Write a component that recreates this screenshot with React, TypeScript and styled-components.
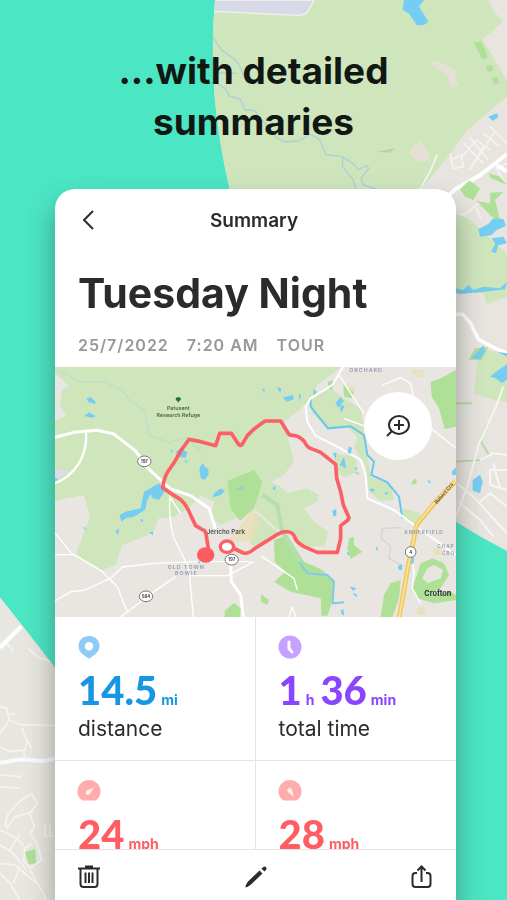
import React from "react";
import styled, { createGlobalStyle } from "styled-components";

const GlobalStyle = createGlobalStyle`
  *, *::before, *::after { box-sizing: border-box; }
  body { margin: 0; background: #4be6c4; }
  h1, h2, h3, p, dl, dd, dt { margin: 0; }
`;

const Page = styled.main`
  position: relative;
  isolation: isolate;
  display: flex;
  flex-direction: column;
  height: 100vh;
  overflow: hidden;
  background: #4be6c4;
  font-family: Inter, "Liberation Sans", sans-serif;
  color: #2b2b2d;
`;

const Backdrop = styled.svg`
  position: absolute;
  inset: 0;
  z-index: -1;
  width: 100%;
  height: 100%;
`;

const Headline = styled.h1`
  max-width: 340px;
  margin: 0 auto;
  padding: 45px 0 42px;
  font-size: 37px;
  line-height: 51px;
  font-weight: 700;
  text-align: center;
  color: #111713;
`;

const Card = styled.section`
  display: flex;
  flex: 1;
  flex-direction: column;
  min-height: 0;
  margin: 0 51px 0 55px;
  overflow: hidden;
  border-radius: 20px 20px 0 0;
  background: #fff;
`;

const CardShadow = styled.div`
  display: flex;
  flex: 1;
  flex-direction: column;
  min-height: 0;
  filter: drop-shadow(0 16px 14px rgba(40, 40, 40, 0.42));
`;

const NavBar = styled.header`
  display: grid;
  grid-template-columns: 24px 1fr 24px;
  align-items: center;
  height: 62px;
  flex-shrink: 0;
  padding: 0 24px 0 21px;
`;

const NavTitle = styled.h2`
  padding-top: 2px;
  font-size: 19px;
  line-height: 24px;
  font-weight: 600;
  text-align: center;
`;

const IconButton = styled.button`
  display: grid;
  place-items: center;
  width: 24px;
  height: 24px;
  padding: 0;
  border: 0;
  background: none;
  color: #2b2b2d;
  cursor: pointer;
`;

const Intro = styled.div`
  flex-shrink: 0;
  padding: 16px 23px 12px;
`;

const RideTitle = styled.h3`
  font-size: 41px;
  line-height: 52px;
  font-weight: 700;
  white-space: nowrap;
`;

const Meta = styled.p`
  display: flex;
  gap: 18px;
  padding-top: 16px;
  font-size: 16px;
  line-height: 20px;
  font-weight: 600;
  letter-spacing: 1px;
  color: #98989a;
`;

const MapPanel = styled.div`
  position: relative;
  flex-shrink: 0;
  height: 250px;
  overflow: hidden;
`;

const MapDrawing = styled.svg`
  display: block;
  width: 100%;
  height: 100%;
  font-family: Inter, "Liberation Sans", sans-serif;
`;

const ZoomButton = styled.button`
  position: absolute;
  top: 25px;
  right: 24px;
  display: grid;
  place-items: center;
  width: 68px;
  height: 68px;
  padding: 0;
  border: 0;
  border-radius: 50%;
  background: #fff;
  color: #2b2b2d;
  cursor: pointer;
`;

const Stats = styled.dl`
  display: grid;
  flex: 1;
  grid-template-columns: 1fr 1fr;
  grid-auto-rows: 144px;
  min-height: 0;
  overflow: hidden;
`;

const Stat = styled.div`
  display: flex;
  flex-direction: column;
  padding: 18px 23px 0;
  border-bottom: 1px solid #e4e4e4;

  &:nth-child(odd) { border-right: 1px solid #e4e4e4; }
`;

const StatIcon = styled.svg`
  flex-shrink: 0;
  width: 24px;
  height: 24px;
  margin-left: -1px;
`;

const StatValue = styled.dd<{ $color: string }>`
  order: 1;
  padding-top: 12px;
  font-family: Lato, "Liberation Sans", sans-serif;
  font-size: 40px;
  line-height: 38px;
  font-weight: 900;
  white-space: nowrap;
  color: ${(p) => p.$color};
`;

const Unit = styled.span`
  margin: 0 6px 0 4px;
  font-family: Inter, "Liberation Sans", sans-serif;
  font-size: 14px;
  font-weight: 700;
`;

const StatLabel = styled.dt`
  order: 2;
  font-size: 21px;
  line-height: 20px;
`;

const Toolbar = styled.footer`
  display: flex;
  flex-shrink: 0;
  align-items: center;
  justify-content: space-between;
  height: 51px;
  padding: 3px 22px 0;
  border-top: 1px solid #e4e4e4;
`;

const water = "#75cdf2";
const park = "#cfe6bd";
const grove = "#aee097";

function BackgroundMap() {
  return (
    <Backdrop viewBox="0 0 1521 2700" preserveAspectRatio="xMidYMin slice" aria-hidden="true">
      <defs>
        <clipPath id="rightArea">
          <path d="M645 0Q632 160 644 290Q656 430 690 570C790 940 1040 1380 1365 1564Q1440 1612 1521 1653V0Z" />
        </clipPath>
        <clipPath id="leftArea">
          <path d="M0 1792Q86 1900 166 2004L500 2300V2700H0Z" />
        </clipPath>
      </defs>
      <g clipPath="url(#rightArea)">
        <rect width="1521" height="2700" fill="#e8e5e0" />
        <path d="M600 0H1465L1478 28L1508 66L1448 118L1521 242V290L1400 392L1345 470L1260 570V700H600Z" fill={park} />
        <path d="M640 0H942L925 32Q918 46 895 46L640 34Z" fill="#d8d9e6" stroke="#f0f1ef" strokeWidth="4" />
        <path d="M1212 0H1272L1257 20L1284 62Q1282 77 1250 76L1228 42L1208 30Z" fill={water} />
        <path d="M1290 182L1321 186L1368 213L1365 235L1378 258L1350 264L1345 230L1310 205Z M1258 420L1280 446L1290 475L1274 486Q1240 482 1226 455Z" fill="#e4e0d4" />
        <path d="M1130 455L1185 445L1170 458Z" fill="#bdceaa" />
        <path d="M1422 128L1444 123L1464 172L1447 180Z M1456 200L1474 195L1481 210L1463 216Z M1474 236L1490 230L1498 249L1482 252Z" fill={grove} />
        <path d="M1465 350L1490 340L1496 350L1478 363Z" fill={water} />
        <g fill="none" stroke="#a9cfdc" strokeWidth="4">
          <path d="M640 112L665 150L700 175L716 192L740 245" />
          <path d="M650 250L675 265L688 288L720 297L735 330L765 332L775 350L810 385L828 412L855 426L900 422L930 402L958 418L978 464L1028 470L1060 492L1075 510L1100 496L1106 505L1083 535L1090 555L1130 568" />
          <path d="M1028 470L1027 500L1045 520L1060 540L1068 570M655 218L710 220" />
        </g>
        <g fill="none" stroke="#f5f3ef" strokeWidth="5">
          <path d="M1312 464L1290 515L1260 568M1350 460L1360 506L1390 500L1385 470L1430 420L1470 450M1390 430L1450 490M1410 412L1464 480M1450 400L1500 440M1470 380L1521 430M1430 480L1480 400M1410 510L1450 440M1350 480L1400 460" />
          <path d="M1367 650L1400 640L1435 610M1442 655L1430 625M1521 560L1490 505L1521 490" />
        </g>
        <path d="M1330 600L1368 566L1440 526L1521 462M1490 495L1521 515" fill="none" stroke="#fff" strokeWidth="12" />
        <path d="M1380 568L1408 541L1440 565L1420 600L1395 590Z M1466 520L1500 530L1521 555L1470 533Z M1430 603L1470 610L1470 578L1510 576L1485 600L1500 660L1475 650Z" fill={grove} />
        <path d="M1360 640Q1420 655 1440 690L1521 760V890L1460 912L1450 880L1360 870Z" fill={park} />
        <g fill={water}>
          <path d="M1435 688L1465 672L1480 655L1510 657L1518 678L1490 690L1474 706L1440 710Z M1475 715L1510 710L1521 730L1494 736L1488 760L1473 755L1486 732Z" />
          <path d="M1360 863L1390 870L1405 855L1420 870L1450 860L1500 865L1521 845L1515 868L1440 877L1380 882L1360 878Z" />
        </g>
        <path d="M1360 943H1388L1412 970L1435 1018L1480 1042L1521 1060" fill="none" stroke="#fff" strokeWidth="11" />
        <path d="M1437 1040L1521 1070V1209L1423 1183Z" fill={park} />
        <path d="M1406 1079L1425 1045L1465 1042L1445 1080Z" fill={grove} />
        <path d="M1415 1075L1450 1036L1455 1055L1440 1078Z M1470 1130L1492 1112L1521 1092V1138L1506 1150L1487 1135Z M1490 1055L1521 1060V1070Z M1418 1440L1440 1424L1448 1445L1440 1480L1418 1472Z" fill={water} />
        <path d="M1368 1210H1415M1462 1272L1440 1320L1467 1365L1440 1380L1368 1385" fill="none" stroke="#afd99c" strokeWidth="5" />
        <g fill="none" stroke="#f8f6f3" strokeWidth="6">
          <path d="M1510 1160L1488 1220L1437 1330L1405 1450L1370 1545M1370 1450L1420 1490L1521 1600M1440 1380L1480 1360L1521 1365M1470 1410H1521M1470 1410V1455L1521 1470M1375 1505L1440 1560L1480 1610M1440 1505L1470 1480L1521 1520M1480 1390L1500 1465" />
        </g>
      </g>
      <g clipPath="url(#leftArea)">
        <rect y="1780" width="520" height="920" fill="#e8e6e0" />
        <path d="M0 1943L64 1879" stroke="#fff" strokeWidth="13" />
        <path d="M0 2288L65 2278L125 2283L170 2276" fill="none" stroke="#fafafe" strokeWidth="12" />
        <g fill="none" stroke="#f6f4f0" strokeWidth="5">
          <path d="M85 1945L110 1970L170 1990M20 1930L40 1955M0 2120L20 2125L28 2160L0 2200M28 2160L60 2174L170 2177M66 2184L75 2210L95 2245M30 2140L46 2145M0 2240L30 2255L75 2250L80 2225M70 2250L75 2277M0 2325L65 2330M0 2360L60 2365" />
          <path d="M20 2485Q10 2455 35 2430Q70 2390 95 2382L112 2410L92 2437L45 2450L20 2485M88 2440L104 2480L90 2500L110 2530L125 2580L90 2605L70 2580L75 2545L95 2530M0 2490L50 2515L70 2535M0 2535L35 2555L80 2610M0 2590L45 2595L110 2650M0 2620L30 2650L60 2700M30 2550L60 2500M60 2600L40 2650M90 2610L140 2700M135 2475V2510L165 2508M150 2475V2505" />
        </g>
        <path d="M75 2555L106 2548L108 2590L86 2593Z" fill={grove} />
      </g>
    </Backdrop>
  );
}

function RideMap() {
  return (
    <MapDrawing viewBox="3 6 1203 750" preserveAspectRatio="xMidYMid slice" role="img" aria-label="Map of the ride">
      <rect width="1210" height="760" fill="#e9e6e1" />
      <path d="M0 0H870L790 60L765 110L690 170L720 290L690 330L650 350L610 430L570 450L500 480L470 460L480 410L440 392L410 425L360 455L315 460L295 505L205 540L185 600L145 616L65 570L108 455L90 390L0 408V170L38 150L18 120L25 75L45 62L0 22Z" fill={park} />
      <path d="M0 310L46 318L0 345Z" fill="#dedbea" />
      <path d="M768 110L800 80L830 70L870 100L920 130L930 180L930 240L945 300L950 335L1010 360L1020 405L980 408L945 380L935 300L900 250L910 215L880 187L820 190L775 145Z M840 265L905 275L910 320L875 338L845 320Z M650 350L680 365L700 385L760 370L795 390L790 410L750 430L780 470L822 500L812 545L755 545L700 500L680 500L600 430V370Z M600 440L670 500L610 550L590 540Z M1047 430L1100 445L1095 478L1045 460Z" fill={park} />
      <path d="M520 348L600 315L625 350L600 430L558 468L530 430Z M660 525L700 510L750 590L800 612L840 645L838 700L820 752H802L800 700L710 680L660 650L695 620L662 590Z M540 714L512 738V756H558L560 730Z M1130 50L1160 40L1206 15V185L1172 192L1155 130L1133 95Z M1075 348L1087 340L1088 356L1072 358Z M1010 655L1040 645L1035 700L1015 756H980L990 690Z M822 50L840 45L835 75L823 70Z M868 60L900 80L895 100L870 95Z M622 688L645 705L640 720L620 710Z M885 520L900 515V540L925 560L890 582L880 550Z" fill={grove} />
      <path d="M1085 640L1100 595L1135 580L1170 595L1185 630L1160 670L1120 690L1190 680L1206 690V705L1140 715L1090 700L1075 670Z M1105 640L1120 655L1160 640L1168 615L1140 600L1120 610Z" fill={grove} fillRule="evenodd" />
      <path d="M598 430L618 480L595 530L520 530L560 480Z M878 55L905 65L895 85Z M1137 550L1165 545L1160 570L1140 572Z M1070 15L1110 15L1105 38L1085 36Z M1088 730L1112 725V750H1090Z" fill="#e8ddb3" opacity=".75" />
      <g fill="none" stroke="#abd3df" strokeWidth="4">
        <path d="M20 18L70 50L150 50L205 75L230 110L270 135L285 210L345 232L400 218L440 262" stroke="#bdddc8" />
        <path d="M1040 488L985 490L982 520L1010 545L1005 580L1050 605" stroke="#ced5df" />
        <path d="M735 590L760 625L820 630L840 650L836 715L870 712" stroke="#7fcce9" strokeWidth="6" />
        <path d="M770 100L770 125L822 190L890 184L930 210L940 270L960 290L952 330L1000 352L1035 395L1045 460" stroke="#68c7ed" strokeWidth="6" />
        <path d="M625 390L670 420L685 500L740 590" stroke="#b4dfaf" strokeWidth="12" />
      </g>
      <g fill="none" stroke="#fff" strokeLinejoin="round">
        <path d="M0 218L60 202L130 196L178 206L245 258L285 313L350 372L410 392L465 430L485 492" strokeWidth="9" />
        <path d="M96 202Q100 250 75 295Q45 340 0 356" strokeWidth="7" />
        <path d="M350 375Q340 450 360 520L405 610L418 756M0 570L60 568L145 620L190 665L220 740M0 710L50 680L90 676L170 640L205 606L300 595L440 590L590 590M365 635L300 680L200 756M405 632H520L600 590M350 400L380 445M0 500L55 568" strokeWidth="4" />
        <path d="M530 600L532 650L560 690L568 756" strokeWidth="9" />
        <path d="M870 0L835 60L770 100L755 125L760 170L785 212L850 245L920 285L935 330L940 400L1020 435L1080 480L1206 570" strokeWidth="6" />
        <path d="M855 30L900 100L930 145M985 60L1040 38L1070 55L1078 95M1130 190L1206 250M620 572L720 640L730 675M1070 550L1080 620L1075 670L1100 715M705 756L715 725L725 756M870 160L950 190" strokeWidth="4" />
      </g>
      <g fill={water}>
        <path d="M97 100L110 97L125 110L123 117L104 112Z M90 153L105 142L125 153L115 158Z M202 470L197 450L215 440L260 430L270 380L315 355L335 375L315 405L295 400L290 388L280 405L273 435L240 455L218 458Z M436 310L446 293L452 305L463 312L464 328L453 345L440 340Z M366 260L380 250L400 262L395 278L370 275Z M348 255L358 258L353 263Z M391 285L401 288L396 295Z M490 378L500 370L513 378L500 390L476 397L480 385Z M545 376L567 362L565 371Z M183 497L196 493L192 510Z M285 502L297 500L297 511Z M0 338L12 342L5 350Z M88 485L96 489L93 496Z M430 590L439 588L437 596Z M258 463L270 464L262 471Z" />
        <path d="M625 73L632 70L631 85Z M668 66L682 70L679 84Z M685 98L715 90L720 102L700 110Z M735 88L742 90L735 108Z M778 73L790 80L778 92Z M845 113L860 97L870 108L853 128Z M860 120L872 122L863 140L858 136Z M836 265L848 262L845 282Z M857 300L870 275L877 310Z M880 262L885 245L894 248L890 268Z M901 306L912 310L906 315Z M902 322L914 323L913 330Z M655 370L664 362L664 378Z M835 437L847 432L847 453L838 454Z M944 373L955 370L963 376L955 381Z M992 382H1001V388H992Z M1120 346L1130 347L1127 357Z M1193 320L1206 307V330H1195Z M877 562L886 563L884 573Z M964 548L971 546L970 560Z M1032 603L1043 598L1045 615H1035Z M1070 578L1080 575L1079 596H1071Z M886 664L907 670L898 678Z M895 683L911 690L905 695Z M860 735L868 733L871 752L863 748Z" />
      </g>
      <path d="M1206 348L1145 410L1088 480L1065 590L1035 760" fill="none" stroke="#efc65f" strokeWidth="14" />
      <path d="M1206 346L1145 408L1088 478L1065 590L1035 760" fill="none" stroke="#fbe69d" strokeWidth="5" />
      <g fill="#fff" stroke="#77787a" strokeWidth="3">
        <ellipse cx="271" cy="289" rx="20" ry="16" />
        <ellipse cx="533" cy="584" rx="20" ry="16" />
        <ellipse cx="276" cy="694" rx="20" ry="16" />
        <circle cx="1070" cy="561" r="16" />
      </g>
      <g fill="#444" fontSize="13" fontWeight="700" textAnchor="middle">
        <text x="271" y="294">197</text>
        <text x="533" y="589">197</text>
        <text x="276" y="699">564</text>
        <text x="1070" y="566">4</text>
      </g>
      <path d="M365 101Q366 95 373 97Q380 95 381 101Q381 107 375 108V112H371V108Q364 107 365 101Z" fill="#26702d" />
      <g fill="#4b6742" fontSize="16" fontWeight="600" textAnchor="middle">
        <text x="373" y="135">Patuxent</text>
        <text x="373" y="157">Research Refuge</text>
      </g>
      <g fill="#9098b6" fontSize="16" fontWeight="600" textAnchor="middle" letterSpacing="3">
        <text x="397" y="611">OLD TOWN</text>
        <text x="397" y="631">BOWIE</text>
        <text x="936" y="22">ORCHARD</text>
        <text x="1110" y="507" fontSize="14">AMBERFIELD</text>
        <text x="1150" y="550" fontSize="14" textAnchor="start">CHAP</text>
        <text x="1164" y="571" fontSize="14" textAnchor="start">CRO</text>
      </g>
      <text x="458" y="508" fill="#4c545a" fontSize="19" fontWeight="600">Jericho Park</text>
      <text x="1111" y="694" fill="#292c2c" fontSize="22" fontWeight="700">Crofton</text>
      <text transform="translate(1149 418) rotate(-50)" fill="#5c5339" fontSize="15" fontWeight="600">Robert Cra</text>
      <path d="M455 570L463 550L458 520Q456 494 445 494L425 482L412 455Q396 416 380 404L350 385L326 368Q330 340 340 322L362 290L380 258L405 223L440 230L485 242L497 205H532L553 237Q560 246 565 237L580 212L600 192L633 168H680L700 200Q704 212 716 211Q732 210 750 228Q760 248 770 250L800 262L845 298L848 340L860 380L868 420L885 458L882 465L860 482L860 520L850 562H790L750 545Q728 532 724 521Q718 502 705 501Q690 497 670 508L600 552Q583 568 568 564L543 552L519 545" fill="none" stroke="#fa6065" strokeWidth="11" strokeLinejoin="round" />
      <ellipse cx="455" cy="570" rx="26" ry="23" fill="#fd5b60" />
      <ellipse cx="519" cy="545" rx="20" ry="17" fill="#fff" stroke="#fa6065" strokeWidth="10" />
    </MapDrawing>
  );
}

const icons = {
  pin: (
    <StatIcon viewBox="0 0 24 24" aria-hidden="true">
      <path fillRule="evenodd" fill="#8fccf3" d="M12 1C6 1 1.500 5 1.500 11c0 5 3.500 8 7 10.200C10 22 11 23.500 12 23.500s2-1.500 3.500-2.300C19 19 22.500 16 22.500 11 22.500 5 18 1 12 1Zm0 6a4.200 4.200 0 1 1 0 8.400A4.200 4.200 0 0 1 12 7Z" />
    </StatIcon>
  ),
  clock: (
    <StatIcon viewBox="0 0 24 24" aria-hidden="true">
      <circle cx="12" cy="12" r="11.500" fill="#c7a1ff" />
      <path d="M11 7v6.500l3 3.500" fill="none" stroke="#fff" strokeWidth="3" strokeLinecap="round" />
    </StatIcon>
  ),
  average: (
    <StatIcon viewBox="0 0 24 24" aria-hidden="true">
      <path d="M5.500 21.500C2 19.500 .5 16 .5 12.500a11.500 11.500 0 0 1 23 0c0 3.500-1.500 7-5 9Z" fill="#ffacaf" />
      <path d="M17 8.500l-4 6.200a2.300 2.300 0 1 1-3-3.200Z" fill="#fff3e6" />
    </StatIcon>
  ),
  top: (
    <StatIcon viewBox="0 0 24 24" aria-hidden="true">
      <path d="M5.500 21.500C2 19.500 .5 16 .5 12.500a11.500 11.500 0 0 1 23 0c0 3.500-1.500 7-5 9Z" fill="#ffacaf" />
      <path d="M16 18l-6.200-5a2.300 2.300 0 1 1 3.700-3Z" fill="#fff3e6" />
    </StatIcon>
  ),
};

type StatItem = {
  icon: keyof typeof icons;
  color: string;
  parts: [string, string][];
  label: string;
};

const stats: StatItem[] = [
  { icon: "pin", color: "#1696e3", parts: [["14.5", "mi"]], label: "distance" },
  { icon: "clock", color: "#8945ff", parts: [["1", "h"], ["36", "min"]], label: "total time" },
  { icon: "average", color: "#ff5d62", parts: [["24", "mph"]], label: "" },
  { icon: "top", color: "#ff5d62", parts: [["28", "mph"]], label: "" },
];

export default function App() {
  return (
    <Page>
      <GlobalStyle />
      <BackgroundMap />
      <Headline>...with detailed summaries</Headline>
      <CardShadow>
        <Card>
          <NavBar>
            <IconButton type="button" aria-label="Back">
              <svg width="24" height="24" viewBox="0 0 24 24" fill="none" stroke="currentColor" strokeWidth="2">
                <path d="M17 3L8 12l9 9" />
              </svg>
            </IconButton>
            <NavTitle>Summary</NavTitle>
          </NavBar>
          <Intro>
            <RideTitle>Tuesday Night</RideTitle>
            <Meta>
              <span>25/7/2022</span>
              <span>7:20 AM</span>
              <span>TOUR</span>
            </Meta>
          </Intro>
          <MapPanel>
            <RideMap />
            <ZoomButton type="button" aria-label="Enlarge map">
              <svg width="24" height="24" viewBox="0 0 24 24" fill="none" stroke="currentColor" strokeWidth="2">
                <ellipse cx="13" cy="11" rx="10" ry="9" />
                <path d="M13 6v10M8 11h10M6 17l-5 5" />
              </svg>
            </ZoomButton>
          </MapPanel>
          <Stats>
            {stats.map((s) => (
              <Stat key={s.icon}>
                {icons[s.icon]}
                {s.label && <StatLabel>{s.label}</StatLabel>}
                <StatValue $color={s.color}>
                  {s.parts.map(([value, unit]) => (
                    <React.Fragment key={unit}>
                      {value}
                      <Unit>{unit}</Unit>
                    </React.Fragment>
                  ))}
                </StatValue>
              </Stat>
            ))}
          </Stats>
          <Toolbar>
            <IconButton type="button" aria-label="Delete">
              <svg width="24" height="24" viewBox="0 0 24 24" fill="none" stroke="currentColor" strokeWidth="2">
                <path d="M1 3.500h22M9 3.500V1.500h6v2M3.500 3.500V19q0 3 3 3h11q3 0 3-3V3.500M8.500 7.500v10.500M12 7.500v10.500M15.500 7.500v10.500" />
              </svg>
            </IconButton>
            <IconButton type="button" aria-label="Edit">
              <svg width="24" height="24" viewBox="0 0 24 24" fill="currentColor">
                <path d="M15.500 5.500l3 3L7 19.500q-3 2.500-5.500 3 0-3 2.500-6Z M17.500 3.700L19.300 1.900q1.300-1 2.600 .2t.3 2.700L20.500 6.600Z" />
              </svg>
            </IconButton>
            <IconButton type="button" aria-label="Share">
              <svg width="24" height="24" viewBox="0 0 24 24" fill="none" stroke="currentColor" strokeWidth="2">
                <path d="M7 8H5.500q-3 0-3 3v8q0 3 3 3h12q3 0 3-3v-8q0-3-3-3H16M11.500 17V2M7.500 5.500L11.500 1.500 15.500 5.500" />
              </svg>
            </IconButton>
          </Toolbar>
        </Card>
      </CardShadow>
    </Page>
  );
}
